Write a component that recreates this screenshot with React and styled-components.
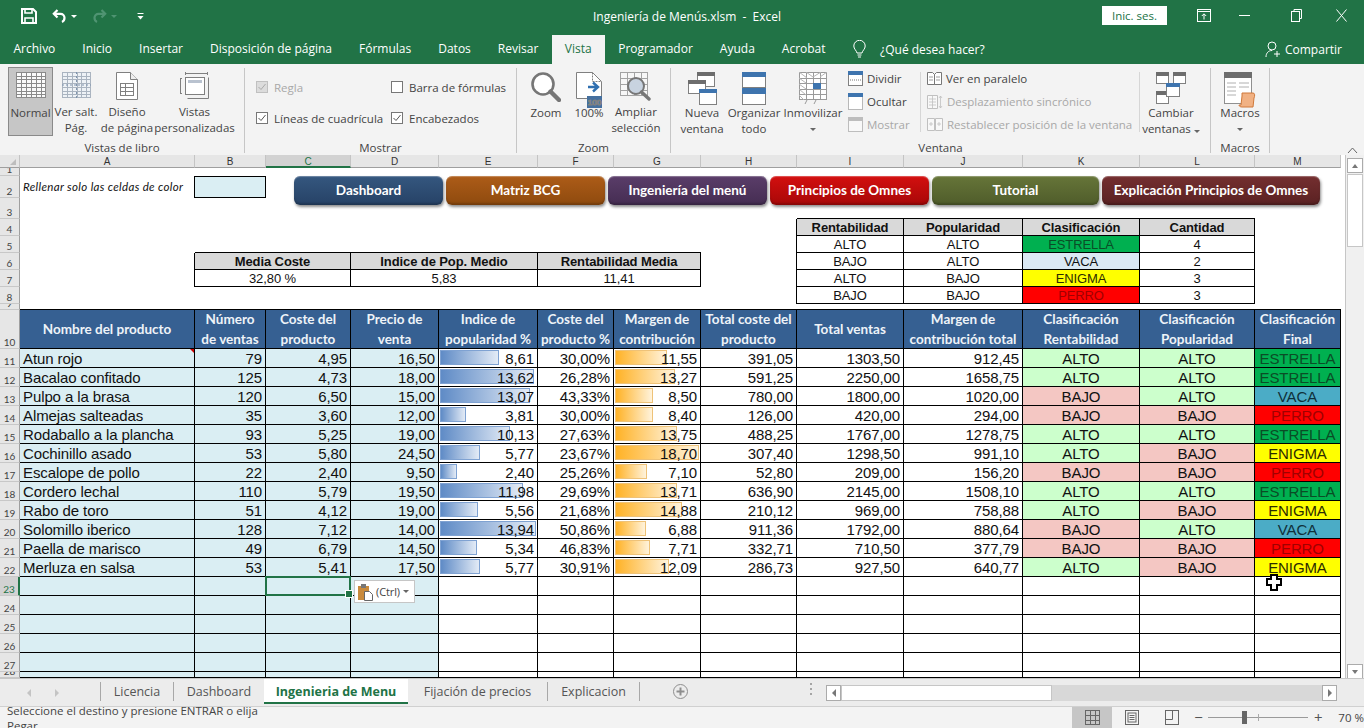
import React from 'react';
import styled, { createGlobalStyle } from 'styled-components';

const GREEN = '#217346';
const UI_FONT = '"Open Sans", "Noto Sans", sans-serif';
const CELL_FONT = '"Liberation Sans", Arial, sans-serif';
const HEAD_FONT = 'Lato, "Open Sans", sans-serif';

const GlobalStyle = createGlobalStyle`
  html, body { margin: 0; padding: 0; background: #fff; }
  * { box-sizing: border-box; }
`;

const columnWidths = [20, 175, 71, 85, 88, 99, 76, 87, 96, 107, 119, 117, 115, 86];
const columnLetters = 'ABCDEFGHIJKLM'.split('');
const rowHeights = [8, 22, 21, 17, 17, 17, 17, 17, 6, 39, ...Array(17).fill(19), 6];

const products = [
  ['Atun rojo', '79', '4,95', '16,50', 8.61, '30,00%', 11.55, '391,05', '1303,50', '912,45', 'ALTO', 'ALTO', 'ESTRELLA'],
  ['Bacalao confitado', '125', '4,73', '18,00', 13.62, '26,28%', 13.27, '591,25', '2250,00', '1658,75', 'ALTO', 'ALTO', 'ESTRELLA'],
  ['Pulpo a la brasa', '120', '6,50', '15,00', 13.07, '43,33%', 8.5, '780,00', '1800,00', '1020,00', 'BAJO', 'ALTO', 'VACA'],
  ['Almejas salteadas', '35', '3,60', '12,00', 3.81, '30,00%', 8.4, '126,00', '420,00', '294,00', 'BAJO', 'BAJO', 'PERRO'],
  ['Rodaballo a la plancha', '93', '5,25', '19,00', 10.13, '27,63%', 13.75, '488,25', '1767,00', '1278,75', 'ALTO', 'ALTO', 'ESTRELLA'],
  ['Cochinillo asado', '53', '5,80', '24,50', 5.77, '23,67%', 18.7, '307,40', '1298,50', '991,10', 'ALTO', 'BAJO', 'ENIGMA'],
  ['Escalope de pollo', '22', '2,40', '9,50', 2.4, '25,26%', 7.1, '52,80', '209,00', '156,20', 'BAJO', 'BAJO', 'PERRO'],
  ['Cordero lechal', '110', '5,79', '19,50', 11.98, '29,69%', 13.71, '636,90', '2145,00', '1508,10', 'ALTO', 'ALTO', 'ESTRELLA'],
  ['Rabo de toro', '51', '4,12', '19,00', 5.56, '21,68%', 14.88, '210,12', '969,00', '758,88', 'ALTO', 'BAJO', 'ENIGMA'],
  ['Solomillo iberico', '128', '7,12', '14,00', 13.94, '50,86%', 6.88, '911,36', '1792,00', '880,64', 'BAJO', 'ALTO', 'VACA'],
  ['Paella de marisco', '49', '6,79', '14,50', 5.34, '46,83%', 7.71, '332,71', '710,50', '377,79', 'BAJO', 'BAJO', 'PERRO'],
  ['Merluza en salsa', '53', '5,41', '17,50', 5.77, '30,91%', 12.09, '286,73', '927,50', '640,77', 'ALTO', 'BAJO', 'ENIGMA'],
];

const tableHeads = [
  ['Nombre del producto'], ['Número', 'de ventas'], ['Coste del', 'producto'], ['Precio de', 'venta'],
  ['Indice de', 'popularidad %'], ['Coste del', 'producto %'], ['Margen de', 'contribución'],
  ['Total coste del', 'producto'], ['Total ventas'], ['Margen de', 'contribución total'],
  ['Clasificación', 'Rentabilidad'], ['Clasificación', 'Popularidad'], ['Clasificación', 'Final'],
];

const summary = [
  [['ALTO'], ['ALTO'], ['ESTRELLA'], ['4']],
  [['BAJO'], ['ALTO'], ['VACA_LIGHT', 'VACA'], ['2']],
  [['ALTO'], ['BAJO'], ['ENIGMA'], ['3']],
  [['BAJO'], ['BAJO'], ['PERRO'], ['3']],
];

const fills = {
  ALTO: ['#ccffcc', '#111'],
  BAJO: ['#f4c7c3', '#111'],
  ESTRELLA: ['#00b050', '#0a4d26'],
  VACA: ['#4bacc6', '#10303a'],
  VACA_LIGHT: ['#dbe9f4', '#111'],
  ENIGMA: ['#ffff00', '#2c2c00'],
  PERRO: ['#ff0000', '#a00000'],
};

const navButtons = [
  ['Dashboard', 149, '#35577f', '#264266'],
  ['Matriz BCG', 159, '#ad5c18', '#8e4a0e'],
  ['Ingeniería del menú', 159, '#5a3d69', '#452d52'],
  ['Principios de Omnes', 159, '#d30f0f', '#a80808'],
  ['Tutorial', 167, '#667539', '#4f5c2a'],
  ['Explicación Principios de Omnes', 218, '#742f30', '#5a2122'],
];

/* window chrome */
const Window = styled.div`
  width: 1364px;
  height: 728px;
  display: flex;
  flex-direction: column;
  overflow: hidden;
  font-family: ${UI_FONT};
`;

const TitleBar = styled.div`
  height: 35px;
  background: ${GREEN};
  color: #fff;
  position: relative;
  display: flex;
  align-items: center;
`;

const QuickAccess = styled.div`
  display: flex;
  align-items: center;
  padding-left: 21px;
  margin-top: -3px;
`;

const QuickBtn = styled.span`
  display: flex;
  align-items: center;
  margin-right: ${p => p.$mr || 0}px;
`;

const TinyCaret = styled.span`
  display: inline-block;
  width: 0;
  height: 0;
  margin-left: ${p => p.$ml ?? 4}px;
  border-left: 3px solid transparent;
  border-right: 3px solid transparent;
  border-top: 3px solid ${p => p.$color || '#666'};
`;

const TitleText = styled.div`
  position: absolute;
  left: 593px;
  top: 8px;
  font-size: 12px;
  line-height: 17px;
  white-space: pre;
`;

const WindowControls = styled.div`
  margin-left: auto;
  display: flex;
  align-items: center;
  margin-top: -5px;
`;

const SignIn = styled.div`
  width: 65px;
  height: 19px;
  background: #fff;
  color: ${GREEN};
  font-size: 11.5px;
  line-height: 19px;
  text-align: center;
  margin-right: 27px;
`;

const WinBtn = styled.span`
  display: flex;
  justify-content: center;
  width: ${p => p.$w}px;
`;

const TabRow = styled.div`
  height: 29px;
  background: ${GREEN};
  display: flex;
  align-items: stretch;
  color: #fff;
  font-size: 12px;
`;

const RibbonTab = styled.div`
  padding: 0 ${p => p.$active ? 13 : 13.5}px;
  line-height: 28px;
  white-space: nowrap;
  ${p => p.$active && `background: #f3f3f3; color: ${GREEN}; margin-top: -1px; padding-top: 1px;`}
`;

const TellMe = styled.div`
  display: flex;
  align-items: center;
  gap: 14px;
  margin-left: 14px;
`;

const ShareBox = styled.div`
  margin-left: auto;
  display: flex;
  align-items: center;
  gap: 4px;
  padding-right: 22px;
`;

/* ribbon */
const Ribbon = styled.div`
  height: 91px;
  background: #f3f3f3;
  display: flex;
  padding-top: 3px;
  position: relative;
  color: #444;
  font-size: 11.5px;
`;

const Group = styled.div`
  width: ${p => p.$w}px;
  height: 88px;
  display: flex;
  flex-direction: column;
`;

const GroupBody = styled.div`
  height: 74px;
  display: flex;
  padding-left: ${p => p.$pl || 0}px;
`;

const GroupName = styled.div`
  height: 14px;
  line-height: 14px;
  text-align: center;
  white-space: nowrap;
`;

const GroupSep = styled.div`
  width: 1px;
  height: 85px;
  background: #c6c6c6;
  margin-top: 1px;
`;

const BigBtn = styled.div`
  width: ${p => p.$w}px;
  height: 69px;
  display: flex;
  flex-direction: column;
  align-items: center;
  flex: none;
  ${p => p.$active && 'background: #c6c6c6; outline: 1px solid #8a8a8a; outline-offset: -1px;'}
`;

const BigIcon = styled.div`
  height: 38px;
  padding-top: 5px;
  display: flex;
  justify-content: center;
`;

const BigLabel = styled.div`
  text-align: center;
  line-height: 16px;
  white-space: nowrap;
`;

const CaretLine = styled.div`
  height: 16px;
  display: flex;
  align-items: center;
  justify-content: center;
`;

const CheckGrid = styled.div`
  display: grid;
  grid-template-columns: 135px auto;
  grid-auto-rows: 18px;
  row-gap: 13px;
  padding-top: 11px;
`;

const CheckRow = styled.div`
  display: flex;
  align-items: center;
  gap: 6px;
  white-space: nowrap;
  color: ${p => p.$off ? '#a8a8a8' : '#444'};
`;

const CheckBox = styled.span`
  width: 12px;
  height: 12px;
  border: 1px solid ${p => p.$off ? '#c0c0c0' : '#777'};
  background: ${p => p.$off ? '#dcdcdc' : '#fff'};
  display: flex;
  align-items: center;
  justify-content: center;
`;

const SmallCol = styled.div`
  width: ${p => p.$w}px;
  flex: none;
  display: flex;
  flex-direction: column;
  padding-left: ${p => p.$pl || 0}px;
  ${p => p.$sep && 'position: relative;'}
`;

const SmallBtn = styled.div`
  height: 23px;
  display: flex;
  align-items: center;
  gap: 4px;
  white-space: nowrap;
  color: ${p => p.$off ? '#a8a8a8' : '#444'};
`;

const SmallSep = styled.div`
  width: 1px;
  height: 60px;
  margin-top: 5px;
  background: #d6d6d6;
  flex: none;
`;

const Collapse = styled.span`
  position: absolute;
  right: 6px;
  bottom: 1px;
  display: flex;
`;

/* sheet */
const SheetArea = styled.div`
  height: 523px;
  display: flex;
  background: #fff;
  overflow: hidden;
`;

const SheetGrid = styled.div`
  display: grid;
  flex: none;
  grid-template-columns: ${columnWidths.map(w => `${w}px`).join(' ')};
  grid-template-rows: 13px ${rowHeights.map(h => `${h}px`).join(' ')};
  font-family: ${CELL_FONT};
  color: #111;
`;

const Corner = styled.div`
  grid-row: 1;
  grid-column: 1;
  background: #e6e6e6;
  border-bottom: 1px solid #9f9f9f;
  border-right: 1px solid #c4c4c4;
  position: relative;
  &::after {
    content: '';
    position: absolute;
    right: 3px;
    bottom: 2px;
    border-left: 6px solid transparent;
    border-bottom: 6px solid #bdbdbd;
  }
`;

const ColHead = styled.div`
  grid-row: 1;
  grid-column: ${p => p.$c};
  background: ${p => p.$on ? '#d2d2d2' : '#e6e6e6'};
  border-right: 1px solid #c4c4c4;
  border-bottom: ${p => p.$on ? `2px solid ${GREEN}` : '1px solid #9f9f9f'};
  font-size: 10px;
  line-height: 13px;
  text-align: center;
  color: ${p => p.$on ? GREEN : '#333'};
`;

const RowHead = styled.div`
  grid-row: ${p => p.$r + 1};
  grid-column: 1;
  background: ${p => p.$on ? '#d2d2d2' : '#e6e6e6'};
  border-bottom: 1px solid #c8c8c8;
  border-right: ${p => p.$on ? `2px solid ${GREEN}` : '1px solid #9f9f9f'};
  font-family: ${HEAD_FONT};
  font-size: 10px;
  line-height: 11px;
  color: ${p => p.$on ? GREEN : '#444'};
  display: flex;
  justify-content: center;
  align-items: flex-end;
  overflow: hidden;
`;

const Cell = styled.div`
  grid-row: ${p => p.$r + 1};
  grid-column: ${p => p.$c} / span ${p => p.$span || 1};
  position: relative;
  background: ${p => p.$bg || 'transparent'};
  color: ${p => p.$fg || '#111'};
  font-size: ${p => p.$size || 15}px;
  font-weight: ${p => p.$bold ? 700 : 400};
  border-right: 1px solid #000;
  border-bottom: 1px solid #000;
  box-shadow: ${p => [p.$left && '-1px 0 0 #000', p.$top && '0 -1px 0 #000'].filter(Boolean).join(', ') || 'none'};
  display: flex;
  align-items: center;
  justify-content: ${p => ({ l: 'flex-start', r: 'flex-end', c: 'center' }[p.$align || 'r'])};
  padding: 0 ${p => p.$align === 'c' ? 0 : 3}px;
  white-space: nowrap;
  letter-spacing: -0.1px;
`;

const CellText = styled.span`
  position: relative;
`;

const DataBar = styled.span`
  position: absolute;
  left: 1px;
  top: 1px;
  height: 15px;
  background: ${p => p.$tone === 'blue'
    ? 'linear-gradient(90deg, #5f8bc6, #e3ebf6)'
    : 'linear-gradient(90deg, #ffb226, #fff3dc)'};
  border: 1px solid ${p => p.$tone === 'blue' ? '#7fa2d2' : '#eec278'};
`;

const HeadCell = styled.div`
  grid-row: 11;
  grid-column: ${p => p.$c};
  background: #366092;
  color: #eef3f8;
  border-right: 1px solid #000;
  border-bottom: 1px solid #000;
  box-shadow: 0 -1px 0 #000;
  font-family: ${HEAD_FONT};
  font-weight: 700;
  font-size: 13.5px;
  line-height: 20px;
  text-align: center;
  display: flex;
  flex-direction: column;
  justify-content: center;
  white-space: nowrap;
`;

const NoteInput = styled.div`
  grid-row: 3;
  grid-column: 2;
  font-family: ${HEAD_FONT};
  font-style: italic;
  font-size: 11.5px;
  letter-spacing: 0.35px;
  padding-left: 3px;
  line-height: 21px;
  white-space: nowrap;
`;

const ColorBox = styled.div`
  grid-row: 3;
  grid-column: 3;
  margin-left: -1px;
  background: #daeef3;
  border: 1px solid #000;
`;

const NavBar = styled.div`
  grid-row: 3 / span 2;
  grid-column: 4 / -1;
  display: flex;
  align-items: flex-start;
  gap: 3px;
  padding-left: 28px;
  z-index: 2;
`;

const NavButton = styled.div`
  width: ${p => p.$w}px;
  height: 29px;
  flex: none;
  border-radius: 6px;
  background: linear-gradient(180deg, ${p => p.$from} 0%, ${p => p.$to} 100%);
  box-shadow: inset 0 1px 1px rgba(255, 255, 255, 0.3), inset 0 -2px 2px rgba(0, 0, 0, 0.2), 1px 2px 3px rgba(0, 0, 0, 0.45);
  color: #fff;
  font-family: ${HEAD_FONT};
  font-weight: 700;
  font-size: 13.5px;
  line-height: 29px;
  text-align: center;
  white-space: nowrap;
`;

const SelectionBox = styled.span`
  position: absolute;
  left: -1px;
  top: -1px;
  right: -1px;
  bottom: -1px;
  border: 2px solid ${GREEN};
  z-index: 3;
  &::after {
    content: '';
    position: absolute;
    right: -4px;
    bottom: -4px;
    width: 6px;
    height: 6px;
    background: ${GREEN};
    border: 1px solid #fff;
  }
`;

const PasteTag = styled.span`
  position: absolute;
  left: 88px;
  top: 3px;
  width: 61px;
  height: 23px;
  background: #fff;
  border: 1px solid #c6c6c6;
  display: flex;
  align-items: center;
  gap: 2px;
  padding-left: 3px;
  font-family: ${UI_FONT};
  font-size: 11px;
  color: #444;
  z-index: 4;
`;

const CursorMark = styled.svg`
  position: absolute;
  left: 11px;
  top: -3px;
  z-index: 4;
`;

const CommentMark = styled.span`
  position: absolute;
  right: 0;
  top: 0;
  border-top: 4px solid #d00000;
  border-left: 4px solid transparent;
`;

const SheetGap = styled.div`
  width: 4px;
  flex: none;
  background: #fff;
`;

const VScroll = styled.div`
  width: 19px;
  flex: none;
  background: #f0f0f0;
  border-left: 1px solid #c6c6c6;
  display: flex;
  flex-direction: column;
  align-items: center;
  padding-top: 3px;
`;

const ScrollEnd = styled.div`
  width: 16px;
  height: ${p => p.$h}px;
  flex: none;
  background: #fff;
  border: 1px solid #ababab;
  display: flex;
  align-items: center;
  justify-content: center;
  margin-top: ${p => p.$mt || 0}px;
`;

const ScrollThumb = styled.div`
  width: 16px;
  height: 73px;
  flex: none;
  margin-top: 1px;
  background: #fff;
  border: 1px solid #c6c6c6;
`;

const Arrow = styled.span`
  width: 0;
  height: 0;
  ${p => ({
    up: `border-left: 3px solid transparent; border-right: 3px solid transparent; border-bottom: 4px solid ${p.$c || '#777'};`,
    down: `border-left: 3px solid transparent; border-right: 3px solid transparent; border-top: 4px solid ${p.$c || '#777'};`,
    left: `border-top: 4px solid transparent; border-bottom: 4px solid transparent; border-right: 4px solid ${p.$c || '#777'};`,
    right: `border-top: 4px solid transparent; border-bottom: 4px solid transparent; border-left: 4px solid ${p.$c || '#777'};`,
  }[p.$dir])}
`;

/* sheet tabs */
const TabBar = styled.div`
  height: 29px;
  background: #ececec;
  border-top: 1px solid #c6c6c6;
  border-bottom: 1px solid #d0d0d0;
  display: flex;
  align-items: flex-start;
  font-size: 12.5px;
  color: #555;
`;

const TabNav = styled.div`
  width: 100px;
  height: 27px;
  display: flex;
  align-items: center;
  gap: 24px;
  padding-left: 27px;
`;

const TabSep = styled.span`
  width: 1px;
  height: 19px;
  margin-top: 3px;
  background: #a8a8a8;
  flex: none;
`;

const SheetTab = styled.div`
  width: ${p => p.$w}px;
  height: ${p => p.$active ? 25 : 27}px;
  flex: none;
  text-align: center;
  line-height: 25px;
  white-space: nowrap;
  ${p => p.$active && `background: #fff; color: ${GREEN}; font-weight: 700; border-bottom: 2px solid ${GREEN};`}
`;

const AddSheet = styled.span`
  margin: 5px 0 0 33px;
  display: flex;
`;

const Dots = styled.span`
  margin: 4px 0 0 122px;
  width: 2px;
  height: 14px;
  background: repeating-linear-gradient(180deg, #a5a5a5 0 2px, transparent 2px 5px);
`;

const HScroll = styled.div`
  margin: 6px 0 0 14px;
  width: 511px;
  height: 16px;
  background: #d8d8d8;
  display: flex;
  flex: none;
`;

const HScrollEnd = styled.div`
  width: 15px;
  flex: none;
  background: #fff;
  border: 1px solid #ababab;
  display: flex;
  align-items: center;
  justify-content: center;
  ${p => p.$end && 'margin-left: auto;'}
`;

const HScrollThumb = styled.div`
  width: 211px;
  background: #fff;
  border: 1px solid #c6c6c6;
`;

/* status bar */
const StatusBar = styled.div`
  height: 21px;
  background: #f3f3f3;
  display: flex;
  align-items: center;
  font-size: 11.5px;
  color: #444;
`;

const StatusText = styled.div`
  padding-left: 7px;
`;

const ViewSwitch = styled.span`
  width: 40px;
  height: 21px;
  display: flex;
  align-items: center;
  justify-content: center;
  flex: none;
  margin-left: ${p => p.$ml || 0}px;
  ${p => p.$active && 'background: #c6c6c6;'}
`;

const ZoomSlider = styled.div`
  width: 100px;
  height: 1px;
  background: #9a9a9a;
  position: relative;
  margin: 0 4px;
  flex: none;
`;

const ZoomKnob = styled.span`
  position: absolute;
  left: 34px;
  top: -6px;
  width: 5px;
  height: 13px;
  background: #666;
`;

const ZoomTick = styled.span`
  position: absolute;
  left: 50px;
  top: -3px;
  width: 1px;
  height: 7px;
  background: #aaa;
`;

const ZoomMark = styled.span`
  font-size: 15px;
  line-height: 15px;
  width: 12px;
  text-align: center;
  color: #555;
`;

const ZoomValue = styled.span`
  margin-left: 14px;
  white-space: nowrap;
`;

/* icons */
const Grid = ({ x, y, w, h, cols, rows, stroke = '#8a8a8a', fill = '#fff' }) => (
  <g stroke={stroke} strokeWidth="1" fill="none">
    <rect x={x + 0.5} y={y + 0.5} width={w - 1} height={h - 1} fill={fill} />
    {Array.from({ length: cols - 1 }, (_, i) => {
      const px = Math.round(x + ((i + 1) * w) / cols) + 0.5;
      return <line key={`c${i}`} x1={px} x2={px} y1={y} y2={y + h} />;
    })}
    {Array.from({ length: rows - 1 }, (_, i) => {
      const py = Math.round(y + ((i + 1) * h) / rows) + 0.5;
      return <line key={`r${i}`} y1={py} y2={py} x1={x} x2={x + w} />;
    })}
  </g>
);

const Win = ({ x, y, w, h, bar = '#6d6d6d', barH = 4 }) => (
  <g>
    <rect x={x + 0.5} y={y + 0.5} width={w - 1} height={h - 1} fill="#fff" stroke="#808080" />
    <rect x={x} y={y} width={w} height={barH} fill={bar} />
  </g>
);

const SaveIcon = () => (
  <svg width="16" height="16" viewBox="0 0 16 16" fill="none" stroke="#fff" strokeWidth="2">
    <path d="M1 1h11l3 3v11H1z" />
    <path d="M4 1v4h7V1M4 15v-5h8v5" strokeWidth="1.6" />
  </svg>
);

const UndoIcon = ({ color }) => (
  <svg width="15" height="14" viewBox="0 0 15 14" fill="none" stroke={color} strokeWidth="2.2">
    <path d="M5.5 1 1.8 4.8l3.7 3.7" />
    <path d="M2 4.8h6.5a4 4 0 0 1 4 4c0 2-1 3.5-2.5 4.2" />
  </svg>
);

const RedoIcon = ({ color }) => (
  <svg width="15" height="14" viewBox="0 0 15 14" fill="none" stroke={color} strokeWidth="2.2">
    <path d="M9.5 1l3.7 3.8-3.7 3.7" />
    <path d="M13 4.8H6.5a4 4 0 0 0-4 4c0 2 1 3.5 2.5 4.2" />
  </svg>
);

const CustomizeIcon = () => (
  <svg width="7" height="7" viewBox="0 0 7 7" fill="#fff">
    <rect x="0.5" y="0" width="6" height="1" />
    <path d="M0.5 3h6L3.5 6.5z" />
  </svg>
);

const RibbonDisplayIcon = () => (
  <svg width="14" height="13" viewBox="0 0 14 13" fill="none" stroke="#fff">
    <rect x="0.5" y="0.5" width="13" height="12" />
    <path d="M0.5 2.5h13M7 10.5V5M4.8 7 7 4.8 9.2 7" />
  </svg>
);

const MinimizeIcon = () => (
  <svg width="11" height="11" viewBox="0 0 11 11" stroke="#fff"><path d="M0 5.5h11" /></svg>
);

const RestoreIcon = () => (
  <svg width="11" height="13" viewBox="0 0 11 13" fill="none" stroke="#fff">
    <path d="M3 2.5V.5h7.5v9H8.5" />
    <rect x="0.5" y="2.5" width="8" height="10" />
  </svg>
);

const CloseIcon = () => (
  <svg width="11" height="13" viewBox="0 0 11 13" stroke="#fff" strokeWidth="1"><path d="M.5.5l10 12M10.5.5l-10 12" /></svg>
);

const BulbIcon = () => (
  <svg width="13" height="19" viewBox="0 0 13 19" fill="none" stroke="#fff">
    <path d="M4 13C3.5 10.5.8 9 .8 6a5.7 5.7 0 0 1 11.4 0c0 3-2.7 4.5-3.2 7z" />
    <path d="M4.5 15h4M5 17h3" />
  </svg>
);

const ShareIcon = () => (
  <svg width="16" height="17" viewBox="0 0 16 17" fill="none" stroke="#fff">
    <circle cx="7" cy="5" r="4" />
    <path d="M1 16c0-4 2.5-6.5 6-6.5M12 10v6M9 13h6" />
  </svg>
);

const NormalViewIcon = () => (
  <svg width="30" height="26" viewBox="0 0 30 26"><Grid x={0} y={0} w={30} h={26} cols={6} rows={7} fill="#fafafa" /></svg>
);

const BreakViewIcon = () => (
  <svg width="29" height="26" viewBox="0 0 29 26">
    <Grid x={0} y={0} w={29} h={26} cols={6} rows={7} stroke="#aab4c0" fill="#eef2f6" />
    <path d="M14.5 0v26M0 13h29" stroke="#7e93ad" strokeDasharray="2 2" />
  </svg>
);

const LayoutViewIcon = () => (
  <svg width="22" height="28" viewBox="0 0 22 28" fill="none" stroke="#808080">
    <path d="M.5.5h14l7 7v20H.5z" fill="#fff" />
    <path d="M14.5.5v7h7" fill="#eee" />
    <rect x="4.5" y="11.5" width="13" height="12" />
    <path d="M4.5 15.5h13M4.5 19.5h13M9.5 11.5v12" />
  </svg>
);

const CustomViewsIcon = () => (
  <svg width="30" height="28" viewBox="0 0 30 28" fill="none" stroke="#808080">
    <path d="M5.5 1.5h22M5.5 0v3M27.5 0v3M.5 6v16M0 6.5h2M0 21.5h2" />
    <rect x="5.5" y="5.5" width="19" height="17" fill="#fff" />
    <rect x="8" y="8" width="14" height="3" fill="#b9c2cf" stroke="none" />
    <path d="M28.5 5.5v21h-21" />
  </svg>
);

const ZoomIcon = () => (
  <svg width="30" height="30" viewBox="0 0 30 30" fill="none" stroke="#767676">
    <circle cx="12" cy="12" r="10.5" strokeWidth="2.6" fill="#fff" />
    <path d="M19.5 19.5 28 28" strokeWidth="4.4" strokeLinecap="round" />
  </svg>
);

const FullZoomIcon = () => (
  <svg width="27" height="37" viewBox="0 0 27 37" fill="none" stroke="#808080">
    <path d="M.5.5h16l9 9v17H.5z" fill="#fff" />
    <path d="M16.5.5v9h9" strokeDasharray="2 1" />
    <path d="M12 15h9M17 10.5l5 4.5-5 4.5" stroke="#2f6fb0" strokeWidth="2.4" />
    <rect x="11" y="24" width="15" height="12" fill="#45709f" stroke="none" />
    <text x="18.5" y="33" fontSize="8" fill="#fff" textAnchor="middle" fontFamily={CELL_FONT}>100</text>
  </svg>
);

const ZoomSelIcon = () => (
  <svg width="32" height="29" viewBox="0 0 32 29" fill="none">
    <Grid x={0} y={0} w={28} h={24} cols={4} rows={4} stroke="#a3a3a3" fill="#f7f7f7" />
    <circle cx="16" cy="14" r="8" fill="#c8d3e0" stroke="#777" strokeWidth="2" />
    <path d="M21.5 20 29 27" stroke="#777" strokeWidth="3.4" strokeLinecap="round" />
  </svg>
);

const NewWindowIcon = () => (
  <svg width="29" height="33" viewBox="0 0 29 33">
    <Win x={9} y={0} w={18} h={15} />
    <Win x={0} y={8} w={18} h={14} />
    <Win x={11} y={17} w={18} h={16} bar="#3e74ae" />
  </svg>
);

const ArrangeIcon = () => (
  <svg width="24" height="33" viewBox="0 0 24 33">
    <Win x={0} y={0} w={24} h={16} bar="#3e74ae" barH={5} />
    <Win x={0} y={16} w={24} h={17} bar="#3e74ae" barH={6} />
  </svg>
);

const FreezeIcon = () => (
  <svg width="30" height="33" viewBox="0 0 30 33">
    <Grid x={1} y={0} w={28} h={28} cols={4} rows={5} stroke="#9a9a9a" fill="#fff" />
    <path d="M1 0l8 6M8 0l7 5M15 5l8-5M22 5l7-5M1 6l7 5M1 12l7 5M1 17l7 6M1 23l5 5" stroke="#b5b5b5" fill="none" />
    <rect x="15" y="11" width="8" height="6" fill="#3e74ae" />
    <path d="M9 28l-2 4M18 28l-2 4" stroke="#9a9a9a" />
  </svg>
);

const SplitIcon = () => (
  <svg width="15" height="15" viewBox="0 0 15 15">
    <rect x=".5" y=".5" width="14" height="14" fill="#fff" stroke="#808080" />
    <rect width="15" height="4" fill="#3e74ae" />
    <path d="M2 9h11" stroke="#777" strokeDasharray="1 1" />
  </svg>
);

const HideIcon = () => (
  <svg width="15" height="17" viewBox="0 0 15 17">
    <rect x=".5" y="3.5" width="14" height="13" fill="#fff" stroke="#777" strokeDasharray="1 1" />
    <rect width="15" height="4" fill="#3e74ae" />
  </svg>
);

const UnhideIcon = () => (
  <svg width="15" height="15" viewBox="0 0 15 15">
    <rect x=".5" y=".5" width="14" height="14" fill="#f8f8f8" stroke="#bdbdbd" />
    <rect width="15" height="4" fill="#bdbdbd" />
  </svg>
);

const SideBySideIcon = ({ color = '#777' }) => (
  <svg width="15" height="13" viewBox="0 0 15 13" fill="#fff" stroke={color}>
    <path d="M.5.5h5l2 2v10h-7zM7.5 2.5l2-2h5v12h-7z" />
    <path d="M2 5h4M2 8h4M9 5h4M9 8h4" strokeWidth=".7" />
  </svg>
);

const SyncIcon = () => (
  <svg width="16" height="14" viewBox="0 0 16 14" fill="#f8f8f8" stroke="#c0c0c0">
    <path d="M.5.5h10v13H.5z" />
    <path d="M5.5.5v13M2 4h7M2 7h7M2 10h7M13.5 1v12M12 3l1.5-2L15 3M12 11l1.5 2 1.5-2" strokeWidth=".8" />
  </svg>
);

const ResetIcon = () => (
  <svg width="16" height="13" viewBox="0 0 16 13" fill="#f8f8f8" stroke="#c0c0c0">
    <path d="M.5.5h7v12h-7zM8.5.5h7v12h-7z" />
    <path d="M2 6h4M10 6h4M4 4v4M12 4v4" strokeWidth=".8" />
  </svg>
);

const SwitchWindowsIcon = () => (
  <svg width="30" height="33" viewBox="0 0 30 33">
    <Win x={0} y={0} w={13} h={12} />
    <Win x={17} y={0} w={13} h={12} />
    <Win x={0} y={19} w={13} h={13} />
    <Win x={10} y={11} w={14} h={14} bar="#3e74ae" />
  </svg>
);

const MacrosIcon = () => (
  <svg width="32" height="37" viewBox="0 0 32 37" fill="none">
    <rect x=".5" y=".5" width="27" height="31" fill="#fff" stroke="#909090" />
    <rect width="28" height="6" fill="#6d6d6d" />
    <path d="M3 11h9M15 11h10M3 15h9M15 15h10M3 19h9M3 23h9" stroke="#b0b0b0" />
    <path d="M18 21h11c2 0 2 3 1 5l-1 9H18c-2 0-3-1-3-2h2l1-9c0-1 0-2 0-3z" fill="#f1b183" stroke="#d0793a" />
  </svg>
);

const Chevron = () => (
  <svg width="11" height="7" viewBox="0 0 11 7" fill="none" stroke="#666"><path d="M1 6l4.5-5L10 6" /></svg>
);

const Tick = ({ color = '#555' }) => (
  <svg width="10" height="10" viewBox="0 0 10 10" fill="none" stroke={color}><path d="M1.5 5l2.5 2.5L8.5 2" /></svg>
);

const PlusCircle = () => (
  <svg width="15" height="15" viewBox="0 0 15 15" fill="none" stroke="#8e8e8e">
    <circle cx="7.5" cy="7.5" r="7" />
    <path d="M7.5 3.5v8M3.5 7.5h8" strokeWidth="2" />
  </svg>
);

const ClipboardIcon = () => (
  <svg width="16" height="18" viewBox="0 0 16 18">
    <rect x="0" y="3" width="11" height="14" fill="#c98a3c" />
    <rect x="3" y="1" width="5" height="4" fill="#777" />
    <path d="M6.5 8.5h5l3 3v6h-8z" fill="#fff" stroke="#666" />
  </svg>
);

const NormalStatusIcon = () => (
  <svg width="15" height="15" viewBox="0 0 15 15"><Grid x={0} y={0} w={15} h={15} cols={3} rows={3} stroke="#666" fill="none" /></svg>
);

const LayoutStatusIcon = () => (
  <svg width="14" height="15" viewBox="0 0 14 15" fill="none" stroke="#666">
    <rect x=".5" y=".5" width="13" height="14" />
    <rect x="3" y="3" width="8" height="9" />
    <path d="M4.5 5.5h5M4.5 7.5h5M4.5 9.5h5" />
  </svg>
);

const BreakStatusIcon = () => (
  <svg width="14" height="15" viewBox="0 0 14 15" fill="none" stroke="#666">
    <rect x=".5" y=".5" width="13" height="14" />
    <path d="M.5 9.5h7V.5" />
  </svg>
);

const Bar = ({ tone, value, scale }) => (
  <DataBar $tone={tone} style={{ width: Math.round(value * scale) }} />
);

const fmt = v => v.toFixed(2).replace('.', ',');

const SheetRows = () => {
  const cells = [];
  products.forEach((p, i) => {
    const r = 11 + i;
    cells.push(
      <Cell key={`a${r}`} $r={r} $c={2} $align="l" $bg="#daeef3">
        {p[0]}
        {i === 0 && <CommentMark />}
      </Cell>,
      <Cell key={`b${r}`} $r={r} $c={3} $bg="#daeef3">{p[1]}</Cell>,
      <Cell key={`c${r}`} $r={r} $c={4} $bg="#daeef3">{p[2]}</Cell>,
      <Cell key={`d${r}`} $r={r} $c={5} $bg="#daeef3">{p[3]}</Cell>,
      <Cell key={`e${r}`} $r={r} $c={6}><Bar tone="blue" value={p[4]} scale={6.9} /><CellText>{fmt(p[4])}</CellText></Cell>,
      <Cell key={`f${r}`} $r={r} $c={7}>{p[5]}</Cell>,
      <Cell key={`g${r}`} $r={r} $c={8}><Bar tone="orange" value={p[6]} scale={4.5} /><CellText>{fmt(p[6])}</CellText></Cell>,
      <Cell key={`h${r}`} $r={r} $c={9}>{p[7]}</Cell>,
      <Cell key={`i${r}`} $r={r} $c={10}>{p[8]}</Cell>,
      <Cell key={`j${r}`} $r={r} $c={11}>{p[9]}</Cell>,
    );
    [10, 11, 12].forEach((k, n) => {
      const [bg, fg] = fills[p[k]];
      cells.push(<Cell key={`k${r}${n}`} $r={r} $c={12 + n} $align="c" $bg={bg} $fg={fg}>{p[k]}</Cell>);
    });
  });
  for (let r = 23; r <= 28; r++) {
    for (let c = 2; c <= 14; c++) {
      cells.push(
        <Cell key={`x${r}-${c}`} $r={r} $c={c} $bg={c <= 5 ? '#daeef3' : undefined}>
          {r === 23 && c === 4 && (
            <>
              <SelectionBox />
              <PasteTag><ClipboardIcon />(Ctrl)<TinyCaret $ml={1} /></PasteTag>
            </>
          )}
          {r === 23 && c === 14 && (
            <CursorMark width="16" height="18" viewBox="0 0 16 18" fill="#fff" stroke="#000" strokeWidth="2">
              <path d="M5 1h6v4h4v6h-4v5H5v-5H1V5h4z" />
            </CursorMark>
          )}
        </Cell>,
      );
    }
  }
  return cells;
};

const App = () => (
  <>
    <GlobalStyle />
    <Window>
      <TitleBar>
        <QuickAccess>
          <QuickBtn $mr={15}><SaveIcon /></QuickBtn>
          <QuickBtn $mr={15}><UndoIcon color="#fff" /><TinyCaret $color="#fff" /></QuickBtn>
          <QuickBtn $mr={20}><RedoIcon color="#4f9472" /><TinyCaret $color="#4f9472" /></QuickBtn>
          <QuickBtn><CustomizeIcon /></QuickBtn>
        </QuickAccess>
        <TitleText>Ingeniería de Menús.xlsm  -  Excel</TitleText>
        <WindowControls>
          <SignIn>Inic. ses.</SignIn>
          <WinBtn $w={20}><RibbonDisplayIcon /></WinBtn>
          <WinBtn $w={60}><MinimizeIcon /></WinBtn>
          <WinBtn $w={44}><RestoreIcon /></WinBtn>
          <WinBtn $w={46}><CloseIcon /></WinBtn>
        </WindowControls>
      </TitleBar>

      <TabRow>
        {['Archivo', 'Inicio', 'Insertar', 'Disposición de página', 'Fórmulas', 'Datos', 'Revisar'].map(t => (
          <RibbonTab key={t}>{t}</RibbonTab>
        ))}
        <RibbonTab $active>Vista</RibbonTab>
        {['Programador', 'Ayuda', 'Acrobat'].map(t => <RibbonTab key={t}>{t}</RibbonTab>)}
        <TellMe><BulbIcon />¿Qué desea hacer?</TellMe>
        <ShareBox><ShareIcon />Compartir</ShareBox>
      </TabRow>

      <Ribbon>
        <Group $w={244}>
          <GroupBody $pl={8}>
            <BigBtn $w={45} $active><BigIcon><NormalViewIcon /></BigIcon><BigLabel>Normal</BigLabel></BigBtn>
            <BigBtn $w={46}><BigIcon><BreakViewIcon /></BigIcon><BigLabel>Ver salt.<br />Pág.</BigLabel></BigBtn>
            <BigBtn $w={56}><BigIcon><LayoutViewIcon /></BigIcon><BigLabel>Diseño<br />de página</BigLabel></BigBtn>
            <BigBtn $w={79}><BigIcon><CustomViewsIcon /></BigIcon><BigLabel>Vistas<br />personalizadas</BigLabel></BigBtn>
          </GroupBody>
          <GroupName>Vistas de libro</GroupName>
        </Group>
        <GroupSep />
        <Group $w={271}>
          <GroupBody $pl={11}>
            <CheckGrid>
              <CheckRow $off><CheckBox $off><Tick color="#aaa" /></CheckBox>Regla</CheckRow>
              <CheckRow><CheckBox />Barra de fórmulas</CheckRow>
              <CheckRow><CheckBox><Tick /></CheckBox>Líneas de cuadrícula</CheckRow>
              <CheckRow><CheckBox><Tick /></CheckBox>Encabezados</CheckRow>
            </CheckGrid>
          </GroupBody>
          <GroupName>Mostrar</GroupName>
        </Group>
        <GroupSep />
        <Group $w={153}>
          <GroupBody $pl={6}>
            <BigBtn $w={46}><BigIcon><ZoomIcon /></BigIcon><BigLabel>Zoom</BigLabel></BigBtn>
            <BigBtn $w={40}><BigIcon><FullZoomIcon /></BigIcon><BigLabel>100%</BigLabel></BigBtn>
            <BigBtn $w={54}><BigIcon><ZoomSelIcon /></BigIcon><BigLabel>Ampliar<br />selección</BigLabel></BigBtn>
          </GroupBody>
          <GroupName>Zoom</GroupName>
        </Group>
        <GroupSep />
        <Group $w={539}>
          <GroupBody $pl={6}>
            <BigBtn $w={50}><BigIcon><NewWindowIcon /></BigIcon><BigLabel>Nueva<br />ventana</BigLabel></BigBtn>
            <BigBtn $w={54}><BigIcon><ArrangeIcon /></BigIcon><BigLabel>Organizar<br />todo</BigLabel></BigBtn>
            <BigBtn $w={64}>
              <BigIcon><FreezeIcon /></BigIcon>
              <BigLabel>Inmovilizar<CaretLine><TinyCaret $ml={0} /></CaretLine></BigLabel>
            </BigBtn>
            <SmallCol $w={75} $pl={3}>
              <SmallBtn><SplitIcon />Dividir</SmallBtn>
              <SmallBtn><HideIcon />Ocultar</SmallBtn>
              <SmallBtn $off><UnhideIcon />Mostrar</SmallBtn>
            </SmallCol>
            <SmallSep />
            <SmallCol $w={218} $pl={6}>
              <SmallBtn><SideBySideIcon />Ver en paralelo</SmallBtn>
              <SmallBtn $off><SyncIcon />Desplazamiento sincrónico</SmallBtn>
              <SmallBtn $off><ResetIcon />Restablecer posición de la ventana</SmallBtn>
            </SmallCol>
            <SmallSep />
            <BigBtn $w={62}>
              <BigIcon><SwitchWindowsIcon /></BigIcon>
              <BigLabel>Cambiar<br />ventanas<TinyCaret $ml={3} /></BigLabel>
            </BigBtn>
          </GroupBody>
          <GroupName>Ventana</GroupName>
        </Group>
        <GroupSep />
        <Group $w={58}>
          <GroupBody>
            <BigBtn $w={58}>
              <BigIcon><MacrosIcon /></BigIcon>
              <BigLabel>Macros<CaretLine><TinyCaret $ml={0} /></CaretLine></BigLabel>
            </BigBtn>
          </GroupBody>
          <GroupName>Macros</GroupName>
        </Group>
        <GroupSep />
        <Collapse><Chevron /></Collapse>
      </Ribbon>

      <SheetArea>
        <SheetGrid>
          <Corner />
          {columnLetters.map((l, i) => <ColHead key={l} $c={i + 2} $on={l === 'C'}>{l}</ColHead>)}
          {rowHeights.map((_, i) => <RowHead key={i} $r={i + 1} $on={i + 1 === 23}>{i + 1}</RowHead>)}

          <NoteInput>Rellenar solo las celdas de color</NoteInput>
          <ColorBox />
          <NavBar>
            {navButtons.map(([label, w, from, to]) => (
              <NavButton key={label} $w={w} $from={from} $to={to}>{label}</NavButton>
            ))}
          </NavBar>

          {['Rentabilidad', 'Popularidad', 'Clasificación', 'Cantidad'].map((t, i) => (
            <Cell key={t} $r={4} $c={10 + i} $align="c" $bg="#d9d9d9" $size={13} $bold $top $left={i === 0}>{t}</Cell>
          ))}
          {summary.map((row, y) => row.map(([v, label], x) => {
            const [bg, fg] = fills[x === 2 ? v : ''] || [];
            return (
              <Cell key={`${y}-${x}`} $r={5 + y} $c={10 + x} $align="c" $size={13} $bg={bg} $fg={fg} $left={x === 0}>
                {label || v}
              </Cell>
            );
          }))}

          <Cell $r={6} $c={3} $span={2} $align="c" $bg="#d9d9d9" $size={13} $bold $top $left>Media Coste</Cell>
          <Cell $r={6} $c={5} $span={2} $align="c" $bg="#d9d9d9" $size={13} $bold $top>Indice de Pop. Medio</Cell>
          <Cell $r={6} $c={7} $span={2} $align="c" $bg="#d9d9d9" $size={13} $bold $top>Rentabilidad Media</Cell>
          <Cell $r={7} $c={3} $span={2} $align="c" $size={13} $left>32,80 %</Cell>
          <Cell $r={7} $c={5} $span={2} $align="c" $size={13}>5,83</Cell>
          <Cell $r={7} $c={7} $span={2} $align="c" $size={13}>11,41</Cell>

          {tableHeads.map((lines, i) => (
            <HeadCell key={lines.join()} $c={i + 2}>
              {lines.map(t => <span key={t}>{t}</span>)}
            </HeadCell>
          ))}
          <SheetRows />
        </SheetGrid>
        <SheetGap />
        <VScroll>
          <ScrollEnd $h={15}><Arrow $dir="up" /></ScrollEnd>
          <ScrollThumb />
          <ScrollEnd $h={15} $mt={417}><Arrow $dir="down" /></ScrollEnd>
        </VScroll>
      </SheetArea>

      <TabBar>
        <TabNav><Arrow $dir="left" $c="#c4c4c4" /><Arrow $dir="right" $c="#c4c4c4" /></TabNav>
        <TabSep />
        <SheetTab $w={72}>Licencia</SheetTab>
        <TabSep />
        <SheetTab $w={90}>Dashboard</SheetTab>
        <SheetTab $w={144} $active>Ingenieria de Menu</SheetTab>
        <SheetTab $w={139}>Fijación de precios</SheetTab>
        <TabSep />
        <SheetTab $w={91}>Explicacion</SheetTab>
        <TabSep />
        <AddSheet><PlusCircle /></AddSheet>
        <Dots />
        <HScroll>
          <HScrollEnd><Arrow $dir="left" /></HScrollEnd>
          <HScrollThumb />
          <HScrollEnd $end><Arrow $dir="right" /></HScrollEnd>
        </HScroll>
      </TabBar>

      <StatusBar>
        <StatusText>Seleccione el destino y presione ENTRAR o elija Pegar</StatusText>
        <ViewSwitch $ml={782} $active><NormalStatusIcon /></ViewSwitch>
        <ViewSwitch><LayoutStatusIcon /></ViewSwitch>
        <ViewSwitch><BreakStatusIcon /></ViewSwitch>
        <ZoomMark>−</ZoomMark>
        <ZoomSlider><ZoomKnob /><ZoomTick /></ZoomSlider>
        <ZoomMark>+</ZoomMark>
        <ZoomValue>70 %</ZoomValue>
      </StatusBar>
    </Window>
  </>
);

export default App;
